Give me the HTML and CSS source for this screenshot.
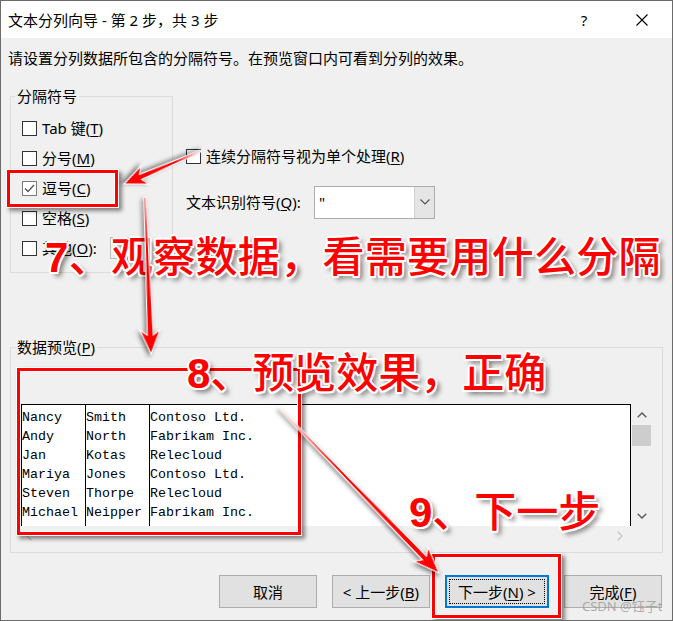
FILE: index.html
```html
<!DOCTYPE html>
<html lang="zh-CN">
<head>
<meta charset="utf-8">
<title>文本分列向导</title>
<link rel="stylesheet" href="styles.css">
</head>
<body>
<div class="window">
  <div class="titlebar">
    <span class="title">文本分列向导 - 第 2 步，共 3 步</span>
    <span class="tb-help">?</span>
    <span class="tb-close"><svg width="12" height="12" viewBox="0 0 12 12"><path d="M0.5 0.5 L11.5 11.5 M11.5 0.5 L0.5 11.5" stroke="#000" stroke-width="1.1" fill="none"/></svg></span>
  </div>
  <div class="content">
    <p class="instr">请设置分列数据所包含的分隔符号。在预览窗口内可看到分列的效果。</p>
    <div class="upper">
      <fieldset class="group delims">
        <legend>分隔符号</legend>
        <div class="cb-row"><span class="cb"></span>Tab 键(<u>T</u>)</div>
        <div class="cb-row"><span class="cb"></span>分号(<u>M</u>)</div>
        <div class="cb-row"><span class="cb checked"><svg width="13" height="13" viewBox="0 0 13 13"><polyline points="2,6.5 5,9.5 11,3" fill="none" stroke="#555" stroke-width="1.3"/></svg></span>逗号(<u>C</u>)</div>
        <div class="cb-row"><span class="cb"></span>空格(<u>S</u>)</div>
        <div class="cb-row"><span class="cb"></span>其他(<u>O</u>):<span class="other-input"></span></div>
      </fieldset>
      <div class="right-opts">
        <div class="cb-row"><span class="cb"></span>连续分隔符号视为单个处理(<u>R</u>)</div>
        <div class="qual-row">
          <span class="qual-label">文本识别符号(<u>Q</u>):</span>
          <div class="combo">
            <span class="combo-val">"</span>
            <span class="combo-btn"><svg width="10" height="6" viewBox="0 0 10 6"><polyline points="0.5,0.5 5,5 9.5,0.5" fill="none" stroke="#555" stroke-width="1.2"/></svg></span>
          </div>
        </div>
      </div>
    </div>
    <fieldset class="group preview-group">
      <legend>数据预览(<u>P</u>)</legend>
      <div class="preview">
        <div class="pv-main">
          <div class="pv-grid">
            <div class="pv-col"><div>Nancy</div><div>Andy</div><div>Jan</div><div>Mariya</div><div>Steven</div><div>Michael</div></div>
            <div class="pv-col"><div>Smith</div><div>North</div><div>Kotas</div><div>Jones</div><div>Thorpe</div><div>Neipper</div></div>
            <div class="pv-col wide"><div>Contoso Ltd.</div><div>Fabrikam Inc.</div><div>Relecloud</div><div>Contoso Ltd.</div><div>Relecloud</div><div>Fabrikam Inc.</div></div>
          </div>
          <div class="vscroll">
            <span class="vs-arrow"><svg width="10" height="6" viewBox="0 0 10 6"><polyline points="0.7,5.3 5,1 9.3,5.3" fill="none" stroke="#606060" stroke-width="1.5"/></svg></span>
            <span class="vs-thumb"></span>
            <span class="vs-fill"></span>
            <span class="vs-arrow"><svg width="10" height="6" viewBox="0 0 10 6"><polyline points="0.7,0.7 5,5 9.3,0.7" fill="none" stroke="#606060" stroke-width="1.5"/></svg></span>
          </div>
        </div>
        <div class="hscroll">
          <svg width="6" height="10" viewBox="0 0 6 10"><polyline points="5.3,0.7 1,5 5.3,9.3" fill="none" stroke="#c8c8c8" stroke-width="1.5"/></svg>
          <svg width="6" height="10" viewBox="0 0 6 10"><polyline points="0.7,0.7 5,5 0.7,9.3" fill="none" stroke="#c8c8c8" stroke-width="1.5"/></svg>
        </div>
      </div>
    </fieldset>
    <div class="buttons">
      <button class="btn">取消</button>
      <button class="btn">&lt; 上一步(<u>B</u>)</button>
      <button class="btn primary"><span>下一步(<u>N</u>) &gt;</span></button>
      <button class="btn">完成(<u>F</u>)</button>
    </div>
  </div>

  <div class="watermark">CSDN @钰子t</div>

  <div class="hl hl-comma"></div>
  <div class="hl hl-preview"></div>
  <div class="hl hl-next"></div>

  <div class="anno anno7"><span class="num">7</span>、观察数据，看需要用什么分隔</div>
  <div class="anno anno8"><span class="num">8</span>、预览效果，正确</div>
  <div class="anno anno9"><span class="num">9</span>、下一步</div>

  <svg class="arrows" width="673" height="621" viewBox="0 0 673 621">
    <g class="arrow" transform="translate(123,183) rotate(156.8)">
      <polygon points="-84,-0.7 -18,-2.8 -23,-10 0,0 -23,10 -18,2.8 -84,0.7"/>
    </g>
    <g class="arrow" transform="translate(150,353) rotate(87.8)">
      <polygon points="-157,-0.8 -19,-3 -24,-10 0,0 -24,10 -19,3 -157,0.8"/>
    </g>
    <g class="arrow" transform="translate(438,572) rotate(45.9)">
      <polygon points="-231,-0.6 -21,-2.8 -26,-10 0,0 -26,10 -21,2.8 -231,0.6"/>
    </g>
  </svg>
</div>
</body>
</html>
```

FILE: styles.css
```css
* { box-sizing: border-box; }
html, body { margin: 0; padding: 0; }
body {
  background: #fff;
  font-family: "Noto Sans", "Noto Sans CJK SC", sans-serif;
  font-size: 15px;
  color: #000;
}
u { text-decoration: underline; text-underline-offset: 2px; }

.window {
  position: relative;
  width: 673px;
  height: 621px;
  border: 1px solid #6b6b6b;
  background: #f0f0f0;
  overflow: hidden;
}

/* title bar */
.titlebar {
  height: 37px;
  background: #fff;
  display: flex;
  align-items: center;
  padding-left: 7px;
  padding-right: 7px;
}
.title { flex: 1; line-height: 20px; }
.tb-help {
  width: 20px;
  text-align: center;
  line-height: 20px;
  margin-right: 25px;
}
.tb-close {
  width: 46px;
  display: flex;
  justify-content: center;
  align-items: center;
}

/* content */
.content { padding: 0 9px 0 9px; }
.instr {
  margin: 10px 0 0 -2px;
  line-height: 20px;
}
.upper {
  display: flex;
  align-items: flex-start;
  margin-top: 18px;
}
.group {
  margin: 0;
  border: 1px solid #dcdcdc;
  min-width: 0;
}
.group legend {
  padding: 0 2px;
  line-height: 20px;
}
.delims {
  width: 163px;
  padding: 7px 0 9px 11px;
}
.delims legend { margin-left: -7px; }

.cb-row {
  display: flex;
  align-items: center;
  height: 30px;
  line-height: 20px;
  white-space: nowrap;
}
.cb {
  width: 15px;
  height: 15px;
  border: 1px solid #333;
  background: #fff;
  margin-right: 5px;
  flex: none;
  display: flex;
  align-items: center;
  justify-content: center;
}
.cb.checked { border-color: #7a7a7a; }
.other-input {
  width: 38px;
  height: 22px;
  margin-left: 13px;
  border: 1px solid #bdbdbd;
  background: #f0f0f0;
}

.right-opts {
  margin-left: 13px;
  margin-top: 60px;
}
.right-opts .cb-row { height: 20px; }
.qual-row {
  display: flex;
  align-items: center;
  margin-top: 20px;
  height: 32px;
}
.qual-label { width: 128px; line-height: 20px; white-space: nowrap; }
.combo {
  width: 121px;
  height: 33px;
  border: 1px solid #adadad;
  background: #fff;
  display: flex;
}
.combo-val { flex: 1; padding-left: 4px; line-height: 30px; }
.combo-btn {
  width: 20px;
  background: #e5e5e5;
  border-left: 1px solid #d0d0d0;
  display: flex;
  align-items: center;
  justify-content: center;
}

/* preview */
.preview-group {
  margin-top: 64px;
  padding: 47px 9px 7px 10px;
}
.preview-group legend { margin-left: -6px; }
.preview { width: 631px; }
.pv-main { display: flex; height: 122px; }
.pv-grid {
  width: 610px;
  background: #fff;
  border-top: 1px solid #000;
  border-right: 1px solid #000;
  display: flex;
  font-family: "Liberation Mono", monospace;
  font-size: 13.33px;
  line-height: 19px;
}
.pv-col {
  width: 64px;
  border-left: 1px solid #000;
  padding-top: 3px;
  white-space: nowrap;
}
.pv-col.wide { width: 150px; }
.vscroll {
  width: 21px;
  display: flex;
  flex-direction: column;
}
.vs-arrow {
  height: 21px;
  display: flex;
  align-items: center;
  justify-content: center;
}
.vs-thumb {
  height: 21px;
  margin: 0 1px;
  background: #cdcdcd;
}
.vs-fill { flex: 1; }
.hscroll {
  height: 19px;
  display: flex;
  align-items: center;
  justify-content: space-between;
  padding: 0 29px 0 5px;
}

/* buttons */
.buttons {
  display: flex;
  justify-content: flex-end;
  gap: 15px;
  margin-top: 22px;
  padding-right: 1px;
}
.btn {
  width: 98px;
  height: 33px;
  background: #e1e1e1;
  border: 1px solid #adadad;
  font-family: "Noto Sans", "Noto Sans CJK SC", sans-serif;
  font-size: 15px;
  color: #000;
  padding: 0;
  line-height: 20px;
}
.btn.primary {
  width: 104px;
  border: 2px solid #0078d7;
  padding: 2px;
}
.btn.primary span {
  display: flex;
  height: 100%;
  align-items: center;
  justify-content: center;
  border: 1px dotted #000;
}

.watermark {
  position: absolute;
  left: 581px;
  top: 596px;
  font-family: "Noto Sans", "Noto Sans CJK SC", sans-serif;
  font-size: 13px;
  line-height: 18px;
  color: rgba(150, 150, 150, 0.75);
  white-space: nowrap;
}

/* highlights */
.hl {
  position: absolute;
  border: 3px solid #ff0000;
  box-shadow: 0 0 0 1px #fff, inset 0 0 0 1px #fff, 3px 3px 4px 1px rgba(0,0,0,0.45);
}
.hl-comma { left: 6px; top: 169px; width: 111px; height: 37px; }
.hl-preview { left: 16px; top: 367px; width: 284px; height: 167px; }
.hl-next { left: 431px; top: 553px; width: 129px; height: 64px; }

.anno {
  position: absolute;
  font-family: "Noto Sans CJK SC", sans-serif;
  font-weight: 500;
  font-size: 42px;
  line-height: 42px;
  color: #ff0000;
  white-space: nowrap;
  text-shadow:
    2px 0 0 #fff, -2px 0 0 #fff, 0 2px 0 #fff, 0 -2px 0 #fff,
    1.5px 1.5px 0 #fff, -1.5px 1.5px 0 #fff, 1.5px -1.5px 0 #fff, -1.5px -1.5px 0 #fff,
    4px 4px 5px rgba(0,0,0,0.55);
}
.anno .num {
  font-family: "Liberation Sans", sans-serif;
  font-weight: 700;
}
.anno7 { left: 44px; top: 232px; letter-spacing: 0.3px; }
.anno8 { left: 186px; top: 348px; }
.anno9 { left: 408px; top: 487px; }

.arrows {
  position: absolute;
  left: 0;
  top: 0;
  pointer-events: none;
}
.arrow {
  fill: #ff0000;
  stroke: #fff;
  stroke-width: 1.2;
  stroke-linejoin: miter;
  filter: drop-shadow(2px 2px 2px rgba(0,0,0,0.5));
}
```
